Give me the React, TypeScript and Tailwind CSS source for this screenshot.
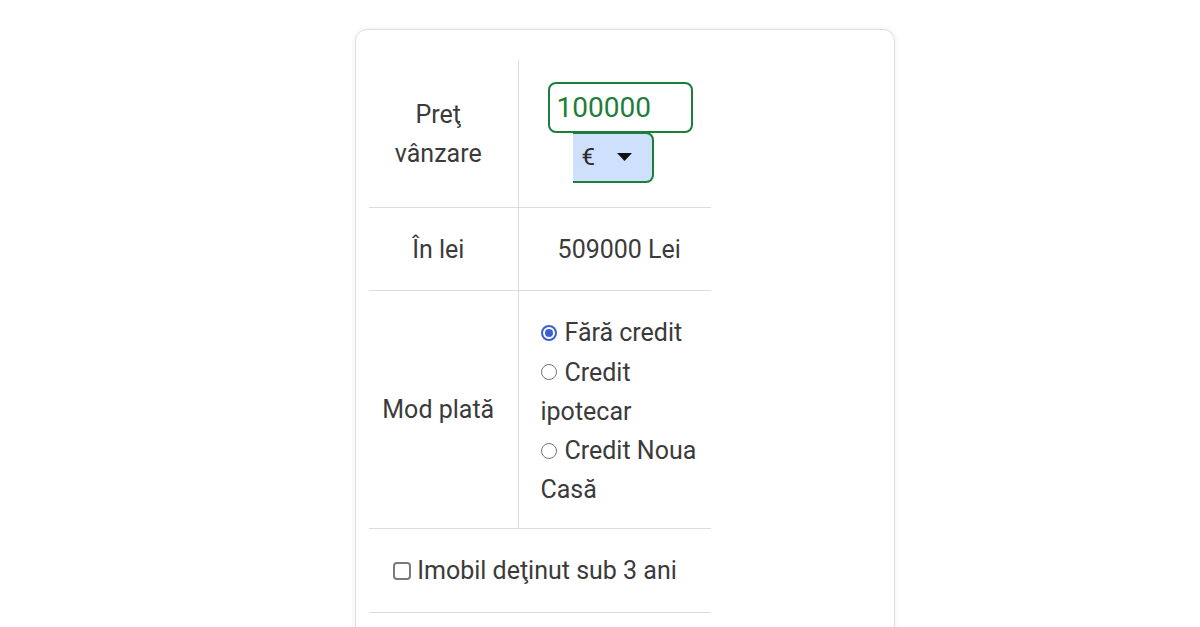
import React from "react";

export default function App() {
  const font = { fontFamily: "Roboto, 'Noto Sans', sans-serif" };
  return (
    <div className="min-h-[627px] w-[1200px] bg-white overflow-hidden" style={font}>
      <div className="pt-[29px] pl-[355px]">
        <div className="w-[540px] h-[640px] rounded-[12px] border border-[#dedede] shadow-[0_0_6px_rgba(0,0,0,0.07)] bg-white pt-[30px] pl-[13px]">
          <table className="w-[342px] border-collapse text-[25px] leading-[39px] text-[#3b3b3b]">
            <tbody>
              <tr className="border-b border-[#dcdcdc]">
                <td className="w-[149px] border-r border-[#dcdcdc] text-center align-middle pl-[8px] pr-[18px]">
                  Preţ<br />vânzare
                </td>
                <td className="pt-[22px] pb-[24px] pl-[29px] align-top">
                  <div className="flex flex-col">
                    <div className="w-[145px] h-[51px] rounded-[8px] border-2 border-[#1b7f3b] flex items-center pl-[7px] text-[28px] text-[#1b7f3b]">
                      100000
                    </div>
                    <div className="ml-[25px] -mt-[1px] w-[81px] h-[51px] bg-[#cfe0fd] border-t-2 border-r-2 border-b-2 border-[#1b7f3b] rounded-r-[8px] flex items-center pl-[9px] text-[24px] text-[#2b2b2b]">
                      <span>€</span>
                      <svg className="ml-[22px]" width="15" height="9" viewBox="0 0 15 9">
                        <polygon points="0,0 15,0 7.5,8" fill="#111" />
                      </svg>
                    </div>
                  </div>
                </td>
              </tr>
              <tr className="border-b border-[#dcdcdc]">
                <td className="h-[83px] border-r border-[#dcdcdc] text-center align-middle pl-[8px] pr-[18px]">
                  În lei
                </td>
                <td className="text-center align-middle pl-[20px] pr-[11px]">509000 Lei</td>
              </tr>
              <tr className="border-b border-[#dcdcdc]">
                <td className="border-r border-[#dcdcdc] text-center align-middle pl-[8px] pr-[18px]">
                  Mod plată
                </td>
                <td className="align-middle pl-[22px] pr-[6px] pt-[22px] pb-[19px]">
                  <div className="flex items-center">
                    <span className="w-[16px] h-[16px] rounded-full border-2 border-[#3c5fd0] flex items-center justify-center mr-[8px]">
                      <span className="w-[8px] h-[8px] rounded-full bg-[#3c5fd0]" />
                    </span>
                    <span>Fără credit</span>
                  </div>
                  <div>
                    <span className="inline-flex items-center">
                      <span className="w-[16px] h-[16px] rounded-full border border-[#767676] mr-[8px] inline-block" />
                      Credit
                    </span>
                    <br />
                    ipotecar
                  </div>
                  <div>
                    <span className="inline-flex items-center">
                      <span className="w-[16px] h-[16px] rounded-full border border-[#767676] mr-[8px] inline-block" />
                      Credit Noua
                    </span>
                    <br />
                    Casă
                  </div>
                </td>
              </tr>
              <tr className="border-b border-[#dcdcdc]">
                <td colSpan={2} className="h-[84px] align-middle">
                  <div className="flex items-center justify-center pr-[10px]">
                    <span className="w-[18px] h-[18px] rounded-[4px] border-2 border-[#7a7a7a] mr-[6px]" />
                    <span>Imobil deţinut sub 3 ani</span>
                  </div>
                </td>
              </tr>
              <tr>
                <td colSpan={2} className="h-[60px]"></td>
              </tr>
            </tbody>
          </table>
        </div>
      </div>
    </div>
  );
}
